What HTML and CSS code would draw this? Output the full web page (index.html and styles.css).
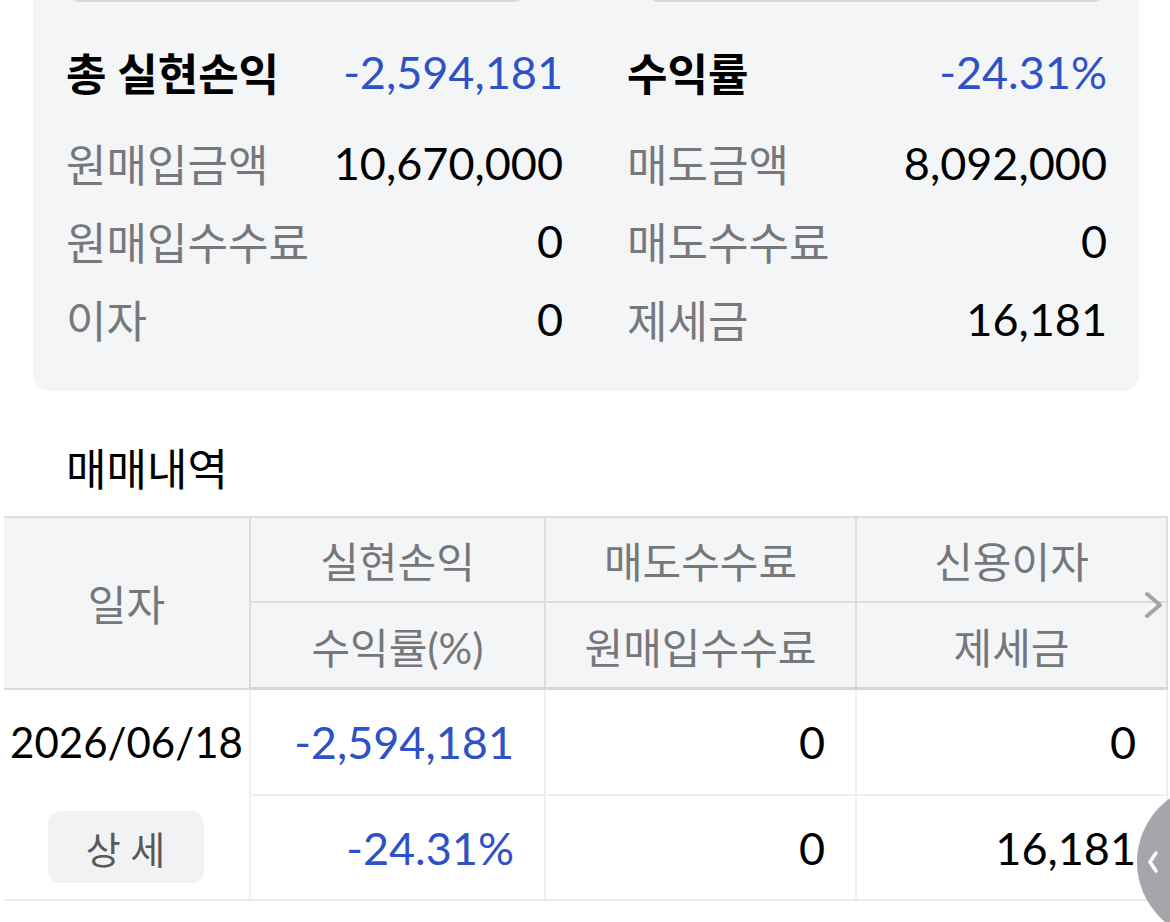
FILE: index.html
```html
<!DOCTYPE html>
<html lang="ko">
<head>
  <meta charset="UTF-8">
  <meta name="viewport" content="width=device-width, initial-scale=1.0">
  <title>실현손익</title>
  <link rel="stylesheet" href="styles.css">
</head>
<body>
  <div class="page">
    <section class="summary">
      <div class="actions">
        <button class="action"></button>
        <button class="action"></button>
      </div>
      <div class="stats">
        <div class="stat total"><span class="label">총 실현손익</span><span class="value minus">-2,594,181</span></div>
        <div class="stat total"><span class="label">수익률</span><span class="value minus">-24.31%</span></div>
        <div class="stat"><span class="label">원매입금액</span><span class="value">10,670,000</span></div>
        <div class="stat"><span class="label">매도금액</span><span class="value">8,092,000</span></div>
        <div class="stat"><span class="label">원매입수수료</span><span class="value">0</span></div>
        <div class="stat"><span class="label">매도수수료</span><span class="value">0</span></div>
        <div class="stat"><span class="label">이자</span><span class="value">0</span></div>
        <div class="stat"><span class="label">제세금</span><span class="value">16,181</span></div>
      </div>
    </section>

    <h2 class="section-title">매매내역</h2>

    <div class="trades">
      <table class="trade-table">
        <colgroup>
          <col class="col-date">
          <col class="col-pl">
          <col class="col-fee">
          <col class="col-tax">
        </colgroup>
        <thead>
          <tr class="head-top">
            <th rowspan="2" class="date-head">일자</th>
            <th>실현손익</th>
            <th>매도수수료</th>
            <th>신용이자</th>
          </tr>
          <tr class="head-bottom">
            <th>수익률(%)</th>
            <th>원매입수수료</th>
            <th>제세금</th>
          </tr>
        </thead>
        <tbody>
          <tr class="row-top">
            <td class="date">2026/06/18</td>
            <td class="minus">-2,594,181</td>
            <td>0</td>
            <td>0</td>
          </tr>
          <tr class="row-bottom">
            <td class="date"><button class="detail-btn">상 세</button></td>
            <td class="minus">-24.31%</td>
            <td>0</td>
            <td>16,181</td>
          </tr>
        </tbody>
      </table>
      <svg class="scroll-hint" width="24" height="30" viewBox="0 0 24 30">
        <path d="M5 4 L18 15 L5 26" fill="none" stroke="#a3a4a7" stroke-width="4" stroke-linecap="round" stroke-linejoin="round"/>
      </svg>
    </div>

    <div class="side-tab">
      <svg width="14" height="22" viewBox="0 0 14 22">
        <path d="M10 2 L4 11 L10 20" fill="none" stroke="#fff" stroke-width="3.5" stroke-linecap="round" stroke-linejoin="round"/>
      </svg>
    </div>
  </div>
</body>
</html>
```

FILE: styles.css
```css
body {
  margin: 0;
  font-family: Lato, "Noto Sans CJK KR", sans-serif;
  background-color: #fff;
  color: #000;
}
.page {
  display: flow-root;
  position: relative;
  height: 922px;
  overflow: hidden;
}
.summary {
  margin: -90px 31px 0 33px;
  padding: 20px 32px 33px 33px;
  background-color: #f4f5f7;
  border-radius: 16px;
}
.actions {
  display: flex;
  justify-content: space-between;
  margin-bottom: 31px;
}
.action {
  width: 461px;
  height: 72px;
  background-color: #fff;
  border: 2px solid #d6d7d9;
  border-radius: 14px;
}
.actions .action:last-child {
  width: 462px;
}
.stats {
  display: grid;
  grid-template-columns: 497px 480px;
  column-gap: 64px;
}
.stat {
  display: flex;
  justify-content: space-between;
  align-items: center;
  height: 78px;
  font-size: 44px;
}
.stat .label {
  color: #77787c;
}
.stat .value {
  font-size: 45px;
}
.stat.total {
  margin-bottom: 13px;
}
.stat.total .label {
  color: #000;
  font-weight: 700;
}
.minus {
  color: #2e52c6;
}
.section-title {
  margin: 48px 0 17px 66px;
  height: 60px;
  line-height: 60px;
  font-size: 44px;
  font-weight: 400;
}
.trades {
  position: relative;
  margin-left: 4px;
  overflow: hidden;
}
.trade-table {
  border-collapse: collapse;
  table-layout: fixed;
  width: 1163px;
  font-size: 42px;
}
.col-date { width: 246px; }
.col-pl { width: 295px; }
.col-fee { width: 311px; }
.col-tax { width: 311px; }
.trade-table th {
  background-color: #f4f5f7;
  color: #76777b;
  font-weight: 400;
  border: 2px solid #dcdddf;
  padding: 0;
}
.trade-table .date-head {
  border-left: none;
}
.head-top th {
  height: 83px;
}
.head-bottom th {
  height: 84px;
  border-bottom: 3px solid #d5d6d8;
}
.trade-table td {
  border: 2px solid #f0f0f1;
  text-align: right;
  padding: 0 30px 0 0;
  font-size: 45px;
}
.trade-table td.date {
  border-left: none;
  text-align: center;
  padding: 0;
  font-size: 42px;
}
.row-top td {
  height: 104px;
}
.row-bottom td {
  height: 103px;
  border-bottom-color: #ebebec;
}
.row-top td.date {
  border-bottom: none;
}
.row-bottom td.date {
  border-top: none;
}
.detail-btn {
  width: 156px;
  height: 72px;
  margin-left: -2px;
  border: none;
  border-radius: 12px;
  background-color: #f1f2f4;
  color: #58595c;
  font-family: inherit;
  font-size: 38px;
}
.scroll-hint {
  position: absolute;
  top: 74px;
  right: 4px;
}
.side-tab {
  position: absolute;
  left: 1137px;
  top: 784px;
  width: 156px;
  height: 156px;
  border-radius: 50%;
  background-color: #a4a6ab;
  display: flex;
  align-items: center;
  padding-left: 9px;
  box-sizing: border-box;
}
```
